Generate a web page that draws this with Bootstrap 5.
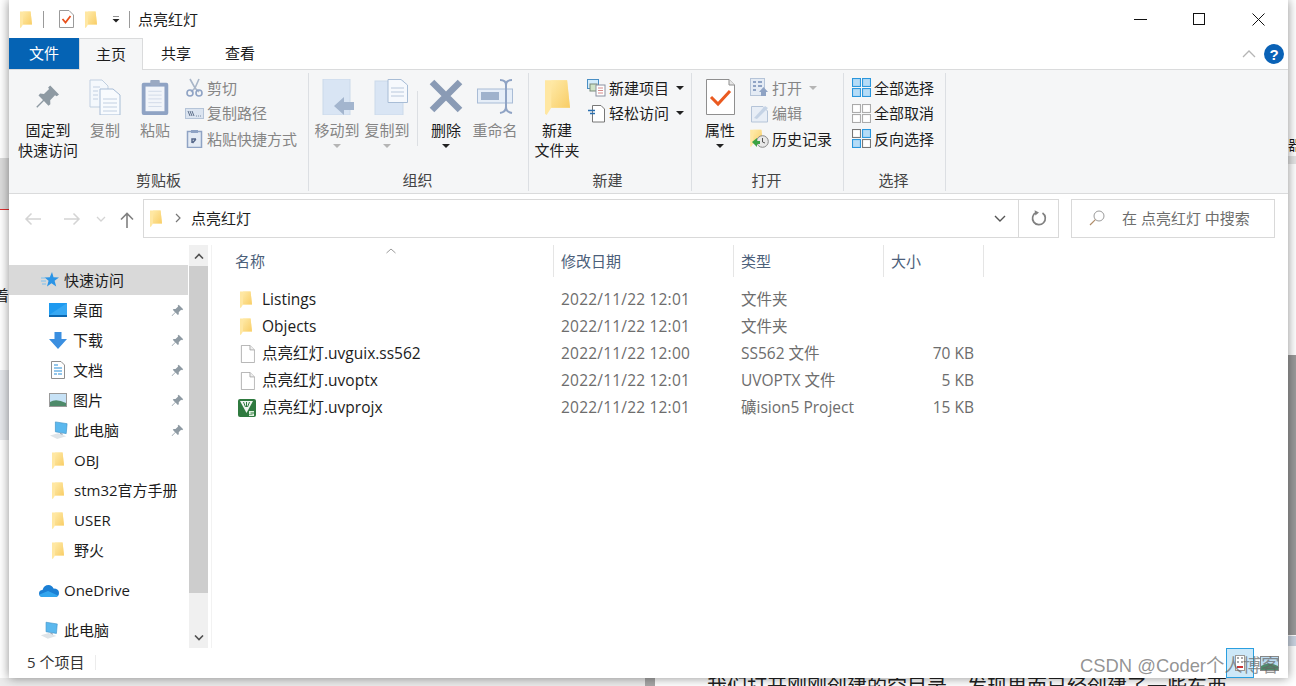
<!DOCTYPE html>
<html lang="zh-CN">
<head>
<meta charset="UTF-8">
<title>点亮红灯</title>
<link href="https://cdn.jsdelivr.net/npm/bootstrap@5.3.0/dist/css/bootstrap.min.css" rel="stylesheet">
<style>
html, body { height: 686px; overflow: hidden; }
body { position: relative; width: 1296px; background: #fff; font-family: "Open Sans", "Noto Sans CJK SC", sans-serif; font-size: 15px; color: #1c1c1c; line-height: 20px; }
svg { display: block; flex: none; }

/* desktop behind the window */
.bg-strip { position: absolute; }
.bg-left-a { left: 0; top: 158px; width: 9px; height: 52px; background: #dcdcdc; border-bottom: 1px solid #e03030; }
.bg-left-b { left: 0; top: 285px; font-size: 15px; width: 9px; overflow: hidden; direction: rtl; }
.bg-left-c { left: 0; top: 370px; width: 9px; height: 70px; background: #e6e8ec; }
.bg-right-a { left: 1288px; top: 355px; width: 8px; height: 280px; background: #9a9a9a; }
.bg-right-b { left: 1288px; top: 135px; width: 8px; font-size: 14px; overflow: hidden; }
.bg-right-c { left: 1288px; top: 156px; width: 8px; height: 8px; background: #e4e4e4; }
.bg-right-d { left: 1288px; top: 636px; width: 8px; height: 10px; background: #c9d3e0; }
.bg-bottom-a { left: 0; top: 678px; width: 645px; height: 8px; background: #ececec; }
.bg-bottom-b { left: 645px; top: 678px; width: 10px; height: 8px; background: #a8a8a8; }
.bg-bottom-c { left: 707px; top: 674px; height: 12px; overflow: hidden; font-size: 20px; line-height: 26px; color: #222; white-space: nowrap; }

.explorer { position: absolute; left: 9px; top: 0; width: 1279px; height: 678px; background: #fff; box-shadow: 0 0 10px rgba(0,0,0,.45); }

/* title bar */
.title-row { height: 38px; padding-left: 11px; }
.title-sep { width: 1px; height: 17px; background: #9a9a9a; }
.win-btn { width: 59px; height: 38px; }

/* tabs */
.tab-row { height: 32px; border-bottom: 1px solid #dadbdc; }
.tab-item { height: 32px; text-align: center; line-height: 31px; width: 64px; }
.tab-file { width: 70px; height: 31px; background: #0563b4; color: #fff; }
.tab-on { height: 32px; background: #f5f6f7; border: 1px solid #dadbdc; border-bottom: 0; margin-right: 1px; }

/* ribbon */
.ribbon { height: 124px; background: #f5f6f7; border-bottom: 1px solid #dadbdc; }
.rb-group { height: 118px; margin-top: 3px; border-right: 1px solid #dcdfe3; }
.rb-body { height: 95px; padding-top: 6px; }
.rb-label { text-align: center; height: 23px; line-height: 24px; color: #444; }
.rb-big { display: flex; flex-direction: column; align-items: center; text-align: center; line-height: 20px; }
.rb-big svg { margin-bottom: 5px; }
.rb-small { display: flex; flex-direction: column; margin-top: -4px; }
.rb-line { height: 25.5px; display: flex; align-items: center; gap: 3px; white-space: nowrap; }
.rb-line svg { width: 19px; height: 19px; }
.rb-off { color: #858585; }
.caret-mark { width: 0; height: 0; border-left: 4px solid transparent; border-right: 4px solid transparent; border-top: 4px solid #222; }
.caret-off { border-top-color: #b5b5b5; }
.rb-vr { width: 1px; height: 55px; background: #dcdfe3; margin-top: 12px; }

/* address row */
.addr-row { height: 46px; padding-top: 5px; }
.addr-box { height: 39px; border: 1px solid #d9d9d9; padding-bottom: 1px; }
.addr-main { width: 876px; }
.addr-refresh { width: 41px; margin-left: -1px; }
.addr-search { width: 204px; margin-left: 12px; color: #6d6d6d; }

/* body */
.pane-row { height: 408px; padding-top: 5px; }
.side-pane { width: 179px; padding-top: 20px; }
.side-line { height: 30px; white-space: nowrap; }
.side-on { background: #d9d9d9; }
.side-lv1 { padding-left: 32px; gap: 5px; }
.side-lv2 { padding-left: 40px; gap: 6px; }
.side-fold { margin-left: 3px; margin-right: 4px; }
.side-pin { margin-left: auto; margin-right: 4px; }
.scroll-col { width: 19px; margin-left: 1px; background: #f0f0f0; display: flex; flex-direction: column; }
.scroll-btn { height: 21px; }
.scroll-thumb { height: 327px; background: #cdcdcd; }
.list-pane { margin-left: 3px; border-left: 1px solid #f2f2f2; position: relative; flex: 1; }
.list-grid { display: grid; grid-template-columns: 342px 180px 150px 100px; }
.list-head { height: 30px; color: #4c607a; }
.head-cell { border-right: 1px solid #e5e5e5; padding-left: 7px; line-height: 32px; height: 32px; }
.head-name { padding-left: 23px; }
.sort-mark { position: absolute; left: 174px; top: 3px; }
.list-body { padding-top: 11px; }
.file-line { height: 27px; line-height: 27px; color: #6d6d6d; font-size: 15.5px; }
.file-name { padding-left: 28px; color: #1c1c1c; gap: 7px; }
.file-fold { margin-right: 3px; }
.file-cell { padding-left: 7px; }
.file-date { letter-spacing: .2px; }
.file-size { text-align: right; padding-right: 10px; }

.status-row { height: 30px; padding: 0 0 2px 18px; color: #333; }
.status-sep { width: 1px; height: 15px; background: #ececec; margin-left: 11px; }

/* things over the window */
.tray-box { position: absolute; left: 1226px; top: 648px; width: 28px; height: 30px; background: #cde8f8; border: 1px solid #2a9fe0; }
.tray-pic { position: absolute; left: 1260px; top: 656px; }
.water-mark { position: absolute; left: 1080px; top: 654px; font-family: "Liberation Sans", "Noto Sans CJK SC", sans-serif; font-size: 18.4px; line-height: 24px; color: rgba(100,100,100,.7); white-space: nowrap; }
</style>
</head>
<body>

<svg width="0" height="0" class="position-absolute">
  <defs>
    <linearGradient id="fold" x1="0" x2="1" y1="0" y2="1"><stop offset="0" stop-color="#ffeaa8"/><stop offset="1" stop-color="#f8cd66"/></linearGradient>
    <symbol id="i-folder" viewBox="0 0 12 17">
      <path d="M0 .6 L10.6 .6 L12 13.6 L3 13.6 L.8 17 L0 16.4 Z" fill="#ffe7a2"/>
      <path d="M3 .6 L10.6 .6 L12 13.6 L3 13.6 Z" fill="url(#fold)"/>
    </symbol>
    <symbol id="i-pin" viewBox="0 0 16 16">
      <path d="M9.5 1 L15 6.5 L13.6 7.6 L12.5 7 L9.5 10.2 L9.6 12.6 L8.4 13.6 L5.6 10.6 L1.4 14.8 L.8 14.2 L5 10 L2.2 7.2 L3.2 6 L5.6 6.2 L8.8 3.2 L8.2 2.2 Z" fill="#8e9aa3"/>
    </symbol>
    <symbol id="i-page" viewBox="0 0 18 22">
      <path d="M1.5 .5 H12 L17.5 6 V21.5 H1.5 Z" fill="#fff" stroke="#a0a0a0"/>
      <path d="M12 .5 V6 H17.5" fill="#efefef" stroke="#a0a0a0"/>
    </symbol>
    <symbol id="i-pc" viewBox="0 0 22 20">
      <path d="M7 1 L20 3 L19 14 L7 12 Z" fill="#5bb8ee" stroke="#3a8fc6" stroke-width=".7"/>
      <path d="M12 13 L15 14 L15 16 L12 15 Z" fill="#9ab"/>
      <path d="M1 16 L10 13.5 L19 17 L9 20 Z" fill="#dfe4e8"/>
    </symbol>
    <symbol id="i-grid" viewBox="0 0 18 18"><rect x=".5" y=".5" width="7.5" height="7.5"/><rect x="10" y=".5" width="7.5" height="7.5"/><rect x=".5" y="10" width="7.5" height="7.5"/><rect x="10" y="10" width="7.5" height="7.5"/></symbol>
  </defs>
</svg>

<!-- window behind -->
<div class="bg-strip bg-left-a"></div>
<div class="bg-strip bg-left-b">着</div>
<div class="bg-strip bg-left-c"></div>
<div class="bg-strip bg-right-a"></div>
<div class="bg-strip bg-right-b">器</div>
<div class="bg-strip bg-right-c"></div>
<div class="bg-strip bg-right-d"></div>
<div class="bg-strip bg-bottom-a"></div>
<div class="bg-strip bg-bottom-b"></div>
<div class="bg-strip bg-bottom-c">我们打开刚刚创建的空目录，发现里面已经创建了一些东西</div>

<div class="explorer d-flex flex-column">

  <!-- title bar -->
  <div class="title-row d-flex align-items-center">
    <svg width="12" height="17"><use href="#i-folder"/></svg>
    <div class="title-sep" style="margin-left:11px"></div>
    <svg style="margin-left:15px" width="15" height="18" viewBox="0 0 15 18">
      <path d="M.5 .5 H10 L14.5 5 V17.5 H.5 Z" fill="#fff" stroke="#9a9a9a"/>
      <path d="M3.5 9 L6.5 12.5 L11.5 6" fill="none" stroke="#e8501c" stroke-width="1.8"/>
    </svg>
    <svg style="margin-left:11px" width="12" height="17"><use href="#i-folder"/></svg>
    <svg style="margin-left:15px" width="8" height="7" viewBox="0 0 8 7"><path d="M1 0 H7" stroke="#222"/><path d="M.5 3 H7.5 L4 6.5 Z" fill="#222"/></svg>
    <div class="title-sep" style="margin-left:9px"></div>
    <span style="margin-left:8px">点亮红灯</span>
    <div class="ms-auto d-flex align-items-center">
      <div class="win-btn d-flex align-items-center justify-content-center"><svg width="13" height="13" viewBox="0 0 13 13"><path d="M0 6.5 H13" stroke="#111"/></svg></div>
      <div class="win-btn d-flex align-items-center justify-content-center"><svg width="13" height="13" viewBox="0 0 13 13"><rect x=".5" y=".5" width="11" height="11" fill="none" stroke="#111"/></svg></div>
      <div class="win-btn d-flex align-items-center justify-content-center"><svg width="13" height="13" viewBox="0 0 13 13"><path d="M.5 .5 L12.5 12.5 M12.5 .5 L.5 12.5" stroke="#111"/></svg></div>
    </div>
  </div>

  <!-- tabs -->
  <div class="tab-row d-flex">
    <div class="tab-item tab-file">文件</div>
    <div class="tab-item tab-on">主页</div>
    <div class="tab-item">共享</div>
    <div class="tab-item">查看</div>
    <div class="ms-auto d-flex align-items-center gap-2 pe-1">
      <svg width="14" height="8" viewBox="0 0 14 8"><path d="M1 7 L7 1 L13 7" fill="none" stroke="#b5b5b5" stroke-width="1.3"/></svg>
      <svg width="20" height="20" viewBox="0 0 20 20"><circle cx="10" cy="10" r="10" fill="#0a62b6"/><text x="10" y="15.5" text-anchor="middle" font-family="Liberation Sans" font-weight="700" font-size="15" fill="#fff">?</text></svg>
    </div>
  </div>

  <!-- ribbon -->
  <div class="ribbon d-flex">
    <div class="rb-group" style="width:300px">
      <div class="rb-body d-flex">
        <div class="rb-big" style="width:60px;margin-left:9px">
          <svg width="36" height="36" viewBox="0 0 36 36"><g transform="translate(5 5) scale(1.6)"><use href="#i-pin" width="16" height="16"/></g></svg>
          <span>固定到<br>快速访问</span>
        </div>
        <div class="rb-big rb-off" style="width:54px">
          <svg width="36" height="36" viewBox="0 0 32 36">
            <path d="M1 1 H13 L19 7 V28 H1 Z" fill="#f4f8fc" stroke="#c0cfe0"/>
            <path d="M11 10 H24 L31 16 V36 H11 Z" fill="#f8fbfe" stroke="#a8bdd6"/>
            <path d="M14 20 H28 M14 24 H28 M14 28 H28 M14 32 H28 M4 8 H11 M4 12 H9 M4 16 H9 M4 20 H9" stroke="#c2d0e2"/>
          </svg>
          <span>复制</span>
        </div>
        <div class="rb-big rb-off" style="width:46px">
          <svg width="30" height="36" viewBox="0 0 30 38">
            <rect x="1" y="4" width="28" height="34" rx="2" fill="#8fa3c4"/>
            <rect x="5" y="8" width="20" height="26" fill="#f2f5fa"/>
            <rect x="10" y="1" width="10" height="6" rx="1" fill="#9aa9c2"/>
            <path d="M8 13 H22 M8 17 H22 M8 21 H22 M8 25 H22 M8 29 H22" stroke="#d0d9e8"/>
          </svg>
          <span>粘贴</span>
        </div>
        <div class="rb-small rb-off" style="margin-left:7px">
          <div class="rb-line"><svg viewBox="0 0 19 19"><path d="M5 1 L10 10 L14 1 M10 10 L14 14 M10 10 L6 14" fill="none" stroke="#a9b6c8" stroke-width="1.6"/><circle cx="5" cy="15" r="3" fill="none" stroke="#8fa3c4" stroke-width="1.6"/><circle cx="14" cy="15" r="3" fill="none" stroke="#8fa3c4" stroke-width="1.6"/></svg><span>剪切</span></div>
          <div class="rb-line"><svg viewBox="0 0 19 19"><rect x=".5" y="4.5" width="18" height="10" fill="#dbe4f0" stroke="#b5c4d8"/><path d="M3 7 L5 12 M5 7 L7 12 M7 7 L9 12" stroke="#5d6f8a"/><path d="M11 12 H12 M13 12 H14 M15 12 H16" stroke="#7d8ea6"/></svg><span>复制路径</span></div>
          <div class="rb-line"><svg viewBox="0 0 19 19"><rect x="2.5" y="2.5" width="14" height="16" fill="#e4ebf4" stroke="#8fa3c4" stroke-width="1.5"/><rect x="6" y="1" width="7" height="3" fill="#8fa3c4"/><path d="M7 14 V10 H11 M11 10 L7.5 14" fill="none" stroke="#56688a" stroke-width="1.5"/></svg><span>粘贴快捷方式</span></div>
        </div>
      </div>
      <div class="rb-label">剪贴板</div>
    </div>

    <div class="rb-group" style="width:220px">
      <div class="rb-body d-flex">
        <div class="rb-big rb-off" style="width:50px;margin-left:3px">
          <svg width="36" height="36" viewBox="0 0 36 36"><rect x="4" y="0" width="27" height="36" fill="#d9e5f4" stroke="#cbd9ea"/><path d="M15 27 L25 18 V23 H35 V31 H25 V36 Z" fill="#a3b5ce"/></svg>
          <span>移动到</span><i class="caret-mark caret-off mt-1"></i>
        </div>
        <div class="rb-big rb-off" style="width:50px">
          <svg width="42" height="36" viewBox="0 0 42 36"><rect x="9" y="2" width="28" height="34" fill="#d9e5f4" stroke="#cbd9ea"/><path d="M22 .5 H35 L41.5 6 V23.5 H22 Z" fill="#f6f9fd" stroke="#a8bdd6"/><path d="M25 9 H38 M25 13 H38 M25 17 H38" stroke="#b9c8dc"/></svg>
          <span>复制到</span><i class="caret-mark caret-off mt-1"></i>
        </div>
        <div class="rb-vr" style="margin-left:5px"></div>
        <div class="rb-big" style="width:48px;margin-left:4px">
          <svg width="34" height="36" viewBox="0 0 34 36"><path d="M3 3 L31 31 M31 3 L3 31" stroke="#8a9bb5" stroke-width="6.5"/></svg>
          <span>删除</span><i class="caret-mark mt-1"></i>
        </div>
        <div class="rb-big rb-off" style="width:50px">
          <svg width="38" height="36" viewBox="0 0 38 36"><rect x="1.5" y="10" width="35" height="14" fill="#e6eef8" stroke="#a9bcd6"/><rect x="5" y="13" width="18" height="8" fill="#9fb2cc"/><path d="M24 1 Q30 1 30 6 V28 Q30 33 24 34 M36 1 Q30 1 30 6 M36 34 Q30 33 30 28" fill="none" stroke="#8fa3c4" stroke-width="2"/></svg>
          <span>重命名</span>
        </div>
      </div>
      <div class="rb-label" style="padding-right:2px">组织</div>
    </div>

    <div class="rb-group" style="width:163px">
      <div class="rb-body d-flex">
        <div class="rb-big" style="width:50px;margin-left:3px">
          <svg width="25" height="36" viewBox="0 0 12 17" preserveAspectRatio="none"><use href="#i-folder"/></svg>
          <span>新建<br>文件夹</span>
        </div>
        <div class="rb-small" style="margin-left:5px">
          <div class="rb-line"><svg viewBox="0 0 19 19"><rect x=".5" y="1.5" width="11" height="9" fill="#d4ecfa" stroke="#4a8fc4"/><rect x="3" y="6" width="7" height="7" fill="#cfe3c6" stroke="#7a8a7a"/><rect x="9" y="7" width="9" height="11" fill="#fff" stroke="#8a8fa0"/><path d="M11 10 H16 M11 12.5 H16 M11 15 H16" stroke="#d58a8a"/></svg><span>新建项目</span><i class="caret-mark ms-1"></i></div>
          <div class="rb-line"><svg viewBox="0 0 19 19"><path d="M5.5 1.5 H14 L17.5 5 V18 H5.5 Z" fill="#fff" stroke="#777"/><path d="M1 6.5 H8 M3 9.5 H8" stroke="#2a6fb0" stroke-width="1.4"/></svg><span>轻松访问</span><i class="caret-mark ms-1"></i></div>
        </div>
      </div>
      <div class="rb-label" style="padding-right:5px">新建</div>
    </div>

    <div class="rb-group" style="width:152px">
      <div class="rb-body d-flex">
        <div class="rb-big" style="width:50px;margin-left:3px">
          <svg width="29" height="36" viewBox="0 0 29 36"><path d="M.5 .5 H23 L28.5 6 V35.5 H.5 Z" fill="#fff" stroke="#8f8f8f"/><path d="M23 .5 V6 H28.5" fill="#e6e6e6" stroke="#8f8f8f"/><path d="M5 18 L12 25 L24 12" fill="none" stroke="#ea5a20" stroke-width="3"/></svg>
          <span>属性</span><i class="caret-mark mt-1"></i>
        </div>
        <div class="rb-small" style="margin-left:5px">
          <div class="rb-line rb-off"><svg viewBox="0 0 19 19"><rect x=".5" y=".5" width="14" height="17" fill="#e4ebf4" stroke="#b5c4d8"/><path d="M3 4 H6 M8 4 H12 M3 8 H6 M8 8 H12 M3 12 H6" stroke="#8fa3c4" stroke-width="2"/><path d="M9 14 L13.5 9 L18 14 H16 V18 H11 V14 Z" fill="#8fa3c4"/></svg><span>打开</span><i class="caret-mark caret-off ms-1"></i></div>
          <div class="rb-line rb-off"><svg viewBox="0 0 19 19"><path d="M1.5 2.5 H13 L17.5 7 V18 H1.5 Z" fill="#e8eef6" stroke="#b5c4d8"/><path d="M4 14 L15 2 L18 4 L7 15 Z" fill="#c5d3e5"/></svg><span>编辑</span></div>
          <div class="rb-line"><svg viewBox="0 0 19 19"><use href="#i-folder" width="13" height="18"/><circle cx="12.5" cy="12.5" r="5.8" fill="#e8e8e8" stroke="#888"/><path d="M12.5 9 V13 L15 14" fill="none" stroke="#555"/><path d="M2 13 L7 9 V12 H10 V15 H7 V18 Z" fill="#3ba344"/></svg><span>历史记录</span></div>
        </div>
      </div>
      <div class="rb-label" style="padding-right:2px">打开</div>
    </div>

    <div class="rb-group" style="width:102px">
      <div class="rb-body d-flex">
        <div class="rb-small" style="margin-left:8px">
          <div class="rb-line"><svg viewBox="0 0 18 18" fill="#b5dcf7" stroke="#2a96dc"><use href="#i-grid"/></svg><span>全部选择</span></div>
          <div class="rb-line"><svg viewBox="0 0 18 18" fill="#fff" stroke="#aaa"><use href="#i-grid"/></svg><span>全部取消</span></div>
          <div class="rb-line"><svg viewBox="0 0 18 18" fill="#fff" stroke="#777"><rect x=".5" y=".5" width="7.5" height="7.5"/><rect x="10" y=".5" width="7.5" height="7.5" fill="#b5dcf7" stroke="#2a96dc"/><rect x=".5" y="10" width="7.5" height="7.5" fill="#b5dcf7" stroke="#2a96dc"/><rect x="10" y="10" width="7.5" height="7.5"/></svg><span>反向选择</span></div>
        </div>
      </div>
      <div class="rb-label" style="padding-right:2px">选择</div>
    </div>
  </div>

  <!-- address row -->
  <div class="addr-row d-flex align-items-start">
    <div class="d-flex align-items-center" style="width:134px;height:39px;padding-left:15px">
      <svg width="18" height="14" viewBox="0 0 18 14"><path d="M17 7 H2 M7.5 1.5 L2 7 L7.5 12.5" fill="none" stroke="#d4d4d4" stroke-width="1.5"/></svg>
      <svg style="margin-left:21px" width="18" height="14" viewBox="0 0 18 14"><path d="M1 7 H16 M10.5 1.5 L16 7 L10.5 12.5" fill="none" stroke="#d4d4d4" stroke-width="1.5"/></svg>
      <svg style="margin-left:15px" width="10" height="6" viewBox="0 0 10 6"><path d="M1 1 L5 5 L9 1" fill="none" stroke="#d4d4d4" stroke-width="1.3"/></svg>
      <svg style="margin-left:14px;margin-top:3px" width="14" height="16" viewBox="0 0 14 16"><path d="M7 16 V1.5 M1 7.5 L7 1.5 L13 7.5" fill="none" stroke="#808080" stroke-width="1.6"/></svg>
    </div>
    <div class="addr-box addr-main d-flex align-items-center">
      <svg style="margin-left:6px" width="12" height="17"><use href="#i-folder"/></svg>
      <svg style="margin-left:13px" width="6" height="10" viewBox="0 0 6 10"><path d="M1 1 L5 5 L1 9" fill="none" stroke="#777" stroke-width="1.2"/></svg>
      <span style="margin-left:10px">点亮红灯</span>
      <svg class="ms-auto" style="margin-right:12px" width="12" height="7" viewBox="0 0 12 7"><path d="M1 1 L6 6 L11 1" fill="none" stroke="#555" stroke-width="1.4"/></svg>
    </div>
    <div class="addr-box addr-refresh d-flex align-items-center justify-content-center">
      <svg width="16" height="16" viewBox="0 0 16 16"><path d="M5 2.6 A6.4 6.4 0 1 0 11.5 3" fill="none" stroke="#808080" stroke-width="1.7"/><path d="M4 0 L8 3 L4 5.5 Z" fill="#808080" transform="rotate(-8 5 3)"/></svg>
    </div>
    <div class="addr-box addr-search d-flex align-items-center" style="padding-left:17px">
      <svg width="16" height="16" viewBox="0 0 16 16"><circle cx="10" cy="6" r="5" fill="none" stroke="#9a9a9a"/><path d="M6.4 9.6 L1 15" stroke="#b08d6a" stroke-width="1.2"/></svg>
      <span style="margin-left:17px">在 点亮红灯 中搜索</span>
    </div>
  </div>

  <!-- panes -->
  <div class="pane-row d-flex">
    <div class="side-pane">
      <div class="side-line side-on side-lv1 d-flex align-items-center"><svg width="18" height="16" viewBox="0 0 18 16"><path d="M11 0 L12.5 5.2 L18 5.5 L13.6 8.8 L15.2 14.5 L10.5 11.3 L6 14.5 L7.6 8.8 L3.5 5.5 L8.8 5.2 Z" fill="#2a94e6"/><path d="M0 6 H4 M0 9 H5 M1 12 H5" stroke="#7cc0ee"/></svg><span>快速访问</span></div>
      <div class="side-line side-lv2 d-flex align-items-center"><svg width="18" height="14" viewBox="0 0 18 14"><rect width="18" height="14" fill="#1e9af0"/><rect y="12" width="18" height="2" fill="#0c67b0"/><path d="M0 12 L18 0 V12 Z" fill="#4fb6f5" opacity=".5"/></svg><span>桌面</span><svg class="side-pin" width="13" height="13"><use href="#i-pin"/></svg></div>
      <div class="side-line side-lv2 d-flex align-items-center"><svg width="18" height="17" viewBox="0 0 18 17"><path d="M5.5 0 H12.5 V7 H18 L9 17 L0 7 H5.5 Z" fill="#3b8fe0"/></svg><span>下载</span><svg class="side-pin" width="13" height="13"><use href="#i-pin"/></svg></div>
      <div class="side-line side-lv2 d-flex align-items-center"><svg width="18" height="18" viewBox="0 0 18 18"><path d="M2.5 .5 H12 L15.5 4 V17.5 H2.5 Z" fill="#fff" stroke="#8f8f8f"/><path d="M5 4 H9 M5 7 H13 M5 10 H13 M9 13 H13 M5 13 H8" stroke="#2a8fd8" stroke-width="1.2"/></svg><span>文档</span><svg class="side-pin" width="13" height="13"><use href="#i-pin"/></svg></div>
      <div class="side-line side-lv2 d-flex align-items-center"><svg width="18" height="14" viewBox="0 0 18 14"><rect x=".5" y=".5" width="17" height="13" fill="#c7e2f6" stroke="#9a9a9a"/><path d="M1 9 Q7 5 17 10 V13 H1 Z" fill="#4e8a6a"/></svg><span>图片</span><svg class="side-pin" width="13" height="13"><use href="#i-pin"/></svg></div>
      <div class="side-line side-lv2 d-flex align-items-center"><svg width="20" height="18" style="margin-right:-1px"><use href="#i-pc"/></svg><span>此电脑</span><svg class="side-pin" width="13" height="13"><use href="#i-pin"/></svg></div>
      <div class="side-line side-lv2 d-flex align-items-center"><svg class="side-fold" width="12" height="17"><use href="#i-folder"/></svg><span>OBJ</span></div>
      <div class="side-line side-lv2 d-flex align-items-center"><svg class="side-fold" width="12" height="17"><use href="#i-folder"/></svg><span>stm32官方手册</span></div>
      <div class="side-line side-lv2 d-flex align-items-center"><svg class="side-fold" width="12" height="17"><use href="#i-folder"/></svg><span>USER</span></div>
      <div class="side-line side-lv2 d-flex align-items-center"><svg class="side-fold" width="12" height="17"><use href="#i-folder"/></svg><span>野火</span></div>
      <div style="height:10px"></div>
      <div class="side-line side-lv1 d-flex align-items-center" style="padding-left:30px"><svg width="20" height="13" viewBox="0 0 20 13"><path d="M4 13 Q0 13 0 9.5 Q0 6 3.5 6 Q5 1 9.5 1 Q13 1 14.5 4.5 Q20 4.5 20 9 Q20 13 16 13 Z" fill="#1b7fd4"/><path d="M4 13 Q1 13 .5 10.5 L9 7 L19 11.5 Q18 13 16 13 Z" fill="#33a6ee"/></svg><span>OneDrive</span></div>
      <div style="height:10px"></div>
      <div class="side-line side-lv1 d-flex align-items-center" style="padding-left:31px"><svg width="19" height="18"><use href="#i-pc"/></svg><span>此电脑</span></div>
    </div>
    <div class="scroll-col">
      <div class="scroll-btn d-flex align-items-center justify-content-center"><svg width="10" height="6" viewBox="0 0 10 6"><path d="M1 5.5 L5 1.5 L9 5.5" fill="none" stroke="#505050" stroke-width="1.6"/></svg></div>
      <div class="scroll-thumb"></div>
      <div class="flex-grow-1"></div>
      <div class="scroll-btn d-flex align-items-center justify-content-center"><svg width="10" height="6" viewBox="0 0 10 6"><path d="M1 .5 L5 4.5 L9 .5" fill="none" stroke="#505050" stroke-width="1.6"/></svg></div>
    </div>
    <div class="list-pane">
      <svg class="sort-mark" width="10" height="6" viewBox="0 0 10 6"><path d="M.5 5 L5 1 L9.5 5" fill="none" stroke="#9a9a9a"/></svg>
      <div class="list-grid list-head">
        <div class="head-cell head-name">名称</div>
        <div class="head-cell">修改日期</div>
        <div class="head-cell">类型</div>
        <div class="head-cell">大小</div>
      </div>
      <div class="list-body">
        <div class="list-grid file-line">
          <div class="file-name d-flex align-items-center"><svg width="12" height="17" class="file-fold"><use href="#i-folder"/></svg><span>Listings</span></div>
          <div class="file-cell file-date">2022/11/22 12:01</div><div class="file-cell">文件夹</div><div class="file-size"></div>
        </div>
        <div class="list-grid file-line">
          <div class="file-name d-flex align-items-center"><svg width="12" height="17" class="file-fold"><use href="#i-folder"/></svg><span>Objects</span></div>
          <div class="file-cell file-date">2022/11/22 12:01</div><div class="file-cell">文件夹</div><div class="file-size"></div>
        </div>
        <div class="list-grid file-line">
          <div class="file-name d-flex align-items-center"><svg width="15" height="18" viewBox="0 0 18 22"><use href="#i-page"/></svg><span>点亮红灯.uvguix.ss562</span></div>
          <div class="file-cell file-date">2022/11/22 12:00</div><div class="file-cell">SS562 文件</div><div class="file-size">70 KB</div>
        </div>
        <div class="list-grid file-line">
          <div class="file-name d-flex align-items-center"><svg width="15" height="18" viewBox="0 0 18 22"><use href="#i-page"/></svg><span>点亮红灯.uvoptx</span></div>
          <div class="file-cell file-date">2022/11/22 12:01</div><div class="file-cell">UVOPTX 文件</div><div class="file-size">5 KB</div>
        </div>
        <div class="list-grid file-line">
          <div class="file-name d-flex align-items-center"><svg width="18" height="18" viewBox="0 0 18 18" style="margin-left:-2px;margin-right:-1px"><rect width="18" height="18" rx="2" fill="#2f7a3f"/><path d="M2 2 H15 L8.5 14 Z" fill="#f0f6f0"/><path d="M5.5 3 L7.5 8 M8.5 3 V8 M11.5 3 L9.5 8" stroke="#2f7a3f"/><path d="M11 12 H16 V13.5 H12.5 V14.5 H16 V17 H11 V15.5 H14.5 V15 H11 Z" fill="#dff0df"/></svg><span>点亮红灯.uvprojx</span></div>
          <div class="file-cell file-date">2022/11/22 12:01</div><div class="file-cell">礦ision5 Project</div><div class="file-size">15 KB</div>
        </div>
      </div>
    </div>
  </div>

  <!-- status -->
  <div class="status-row d-flex align-items-center"><span>5 个项目</span><div class="status-sep"></div></div>
</div>

<div class="tray-box d-flex align-items-center justify-content-center">
  <svg width="10" height="16" viewBox="0 0 10 16"><rect x=".5" y=".5" width="9" height="15" fill="#fff" stroke="#999"/><path d="M2 3 H4 M6 3 H8 M2 7 H4 M6 7 H8" stroke="#555"/><path d="M2 12 H8" stroke="#c33" stroke-width="2"/></svg>
</div>
<svg class="tray-pic" width="19" height="15" viewBox="0 0 19 15"><rect x=".5" y=".5" width="18" height="14" fill="#bcdcf2" stroke="#888"/><path d="M1 10 Q8 5 18 10 V14 H1 Z" fill="#4e8a6a"/></svg>
<div class="water-mark">CSDN @Coder个人博客</div>

</body>
</html>
